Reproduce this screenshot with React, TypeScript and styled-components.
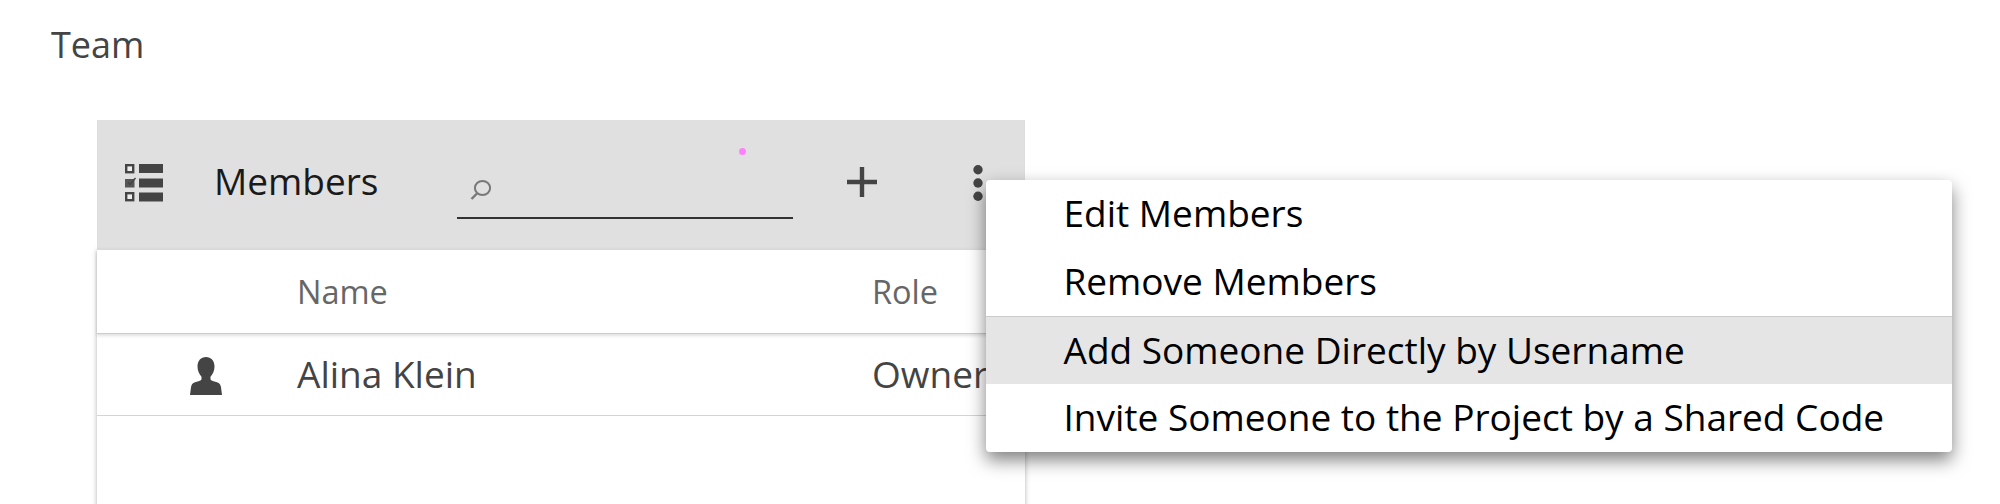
import React from "react";
import styled, { createGlobalStyle } from "styled-components";

const GlobalStyle = createGlobalStyle`
    html, body {
        margin: 0;
        padding: 0;
        height: 504px;
        overflow: hidden;
        background: #fff;
        font-family: "Open Sans", "Liberation Sans", sans-serif;
    }
`;

const menuItems = [
    { label: "Edit Members" },
    { label: "Remove Members" },
    { label: "Add Someone Directly by Username", active: true, divided: true },
    { label: "Invite Someone to the Project by a Shared Code" },
];

const ListIcon = () => (
    <svg width="38" height="38" viewBox="0 0 38 38">
        <g fill="#eee" stroke="#444" strokeWidth="2.4">
            <rect x="1.2" y="1.2" width="7" height="7" />
            <rect x="1.2" y="29.2" width="7" height="7" />
        </g>
        <rect x="0" y="15" width="9.5" height="8.5" fill="#555" />
        <path d="M3 18.5l2 2 5.5-6.5" fill="none" stroke="#444" strokeWidth="1.4" />
        <rect x="14" y="0" width="24" height="9" fill="#444" />
        <rect x="14" y="14.5" width="24" height="9" fill="#444" />
        <rect x="14" y="28.5" width="24" height="9" fill="#444" />
    </svg>
);

const SearchIcon = () => (
    <svg width="22" height="20" viewBox="0 0 22 20">
        <ellipse cx="12.5" cy="8" rx="7.6" ry="7" fill="none" stroke="#777" strokeWidth="2" />
        <path d="M7 13.5L1.5 19" stroke="#777" strokeWidth="2.4" fill="none" />
    </svg>
);

const PlusIcon = () => (
    <svg width="30" height="30" viewBox="0 0 30 30">
        <path d="M0 15h30M15 0v30" stroke="#444" strokeWidth="4.4" fill="none" />
    </svg>
);

const KebabIcon = () => (
    <svg width="10" height="36" viewBox="0 0 10 36">
        <circle cx="5" cy="4.7" r="4.7" fill="#444" />
        <circle cx="5" cy="18" r="4.7" fill="#444" />
        <circle cx="5" cy="31.300" r="4.7" fill="#444" />
    </svg>
);

const PersonIcon = () => (
    <svg width="32" height="38" viewBox="0 0 32 38">
        <path
            d="M16 0c5 0 8.500 3.800 8.500 9.500 0 4.500-2 8-4 10.300v2.200c0 1 1 1.600 3 2.200l3.500 1c2.500.8 3.500 2.300 4 5L32 38H0l1-7.800c.4-2.700 1.500-4.200 4-5l3.500-1c2-.6 3-1.200 3-2.200v-2.200c-2-2.300-4-5.800-4-10.300C7.500 3.800 11 0 16 0z"
            fill="#444"
        />
    </svg>
);

export default function App() {
    return (
        <Page>
            <GlobalStyle />
            <Title>Team</Title>
            <Panel>
                <Toolbar>
                    <ListSlot>
                        <ListIcon />
                    </ListSlot>
                    <PanelTitle>Members</PanelTitle>
                    <SearchField>
                        <SearchIcon />
                    </SearchField>
                    <PlusSlot>
                        <PlusIcon />
                    </PlusSlot>
                    <KebabSlot>
                        <KebabIcon />
                    </KebabSlot>
                    <PinkDot />
                </Toolbar>
                <Body>
                    <HeaderRow>
                        <span />
                        <HeaderCell>Name</HeaderCell>
                        <HeaderCell>Role</HeaderCell>
                    </HeaderRow>
                    <MemberRow>
                        <IconCell>
                            <PersonIcon />
                        </IconCell>
                        <MemberCell>Alina Klein</MemberCell>
                        <MemberCell>Owner</MemberCell>
                    </MemberRow>
                </Body>
                <Menu>
                    {menuItems.map(item => (
                        <MenuItem key={item.label} active={item.active} divided={item.divided}>
                            {item.label}
                        </MenuItem>
                    ))}
                </Menu>
            </Panel>
        </Page>
    );
}

const Page = styled.div`
    padding: 22px 0 0 51px;
    height: 504px;
    box-sizing: border-box;
    overflow: hidden;
`;

const Title = styled.div`
    font-size: 36px;
    line-height: 46px;
    color: #444;
`;

const Panel = styled.div`
    position: relative;
    width: 928px;
    margin: 52px 0 0 46px;
`;

const Toolbar = styled.div`
    position: relative;
    z-index: 1;
    display: flex;
    align-items: flex-start;
    height: 130px;
    background: #e0e0e0;
    box-shadow: inset 0 -2px 2px rgba(0, 0, 0, 0.03);
`;

const ListSlot = styled.div`
    display: flex;
    width: 38px;
    margin: 44px 0 0 28px;
`;

const PanelTitle = styled.div`
    margin: 36px 0 0 51px;
    width: 243px;
    font-size: 37px;
    line-height: 50px;
    color: #1a1a1a;
`;

const SearchField = styled.div`
    display: flex;
    align-items: flex-end;
    box-sizing: border-box;
    width: 336px;
    height: 99px;
    padding: 0 0 17px 13px;
    border-bottom: 2px solid #333;
`;

const PlusSlot = styled.div`
    display: flex;
    margin: 47px 0 0 54px;
`;

const KebabSlot = styled.div`
    display: flex;
    margin: 45px 0 0 96px;
`;

const PinkDot = styled.div`
    position: absolute;
    left: 642px;
    top: 28px;
    width: 7px;
    height: 7px;
    border-radius: 50%;
    background: #ff80ff;
`;

const Body = styled.div`
    height: 270px;
    background: #fff;
    box-shadow: 0 0 5px rgba(0, 0, 0, 0.3);
`;

const HeaderRow = styled.div`
    display: grid;
    grid-template-columns: 200px 575px 1fr;
    align-items: center;
    height: 83px;
    border-bottom: 1px solid #ccc;
    box-shadow: 0 2px 3px rgba(0, 0, 0, 0.12);
`;

const HeaderCell = styled.div`
    font-size: 32.5px;
    color: #666;
`;

const MemberRow = styled.div`
    display: grid;
    grid-template-columns: 200px 575px 1fr;
    align-items: center;
    height: 81px;
    border-bottom: 1px solid #d4d4d4;
`;

const IconCell = styled.div`
    display: flex;
    padding: 3px 0 0 93px;
`;

const MemberCell = styled.div`
    padding-bottom: 2px;
    font-size: 37px;
    color: #444;
    white-space: nowrap;
`;

const Menu = styled.div`
    position: absolute;
    z-index: 2;
    left: 889px;
    top: 60px;
    width: 966px;
    border-radius: 4px;
    overflow: hidden;
    background: #fff;
    box-shadow: 0 8px 18px rgba(0, 0, 0, 0.5);
`;

const MenuItem = styled.div<{ active?: boolean; divided?: boolean }>`
    box-sizing: border-box;
    height: 68px;
    padding-left: 77.5px;
    font-size: 37px;
    line-height: 66px;
    color: #000;
    white-space: nowrap;
    background: ${p => (p.active ? "#e5e5e5" : "transparent")};
    ${p => p.divided && "border-top: 1px solid #ccc;"}
`;
